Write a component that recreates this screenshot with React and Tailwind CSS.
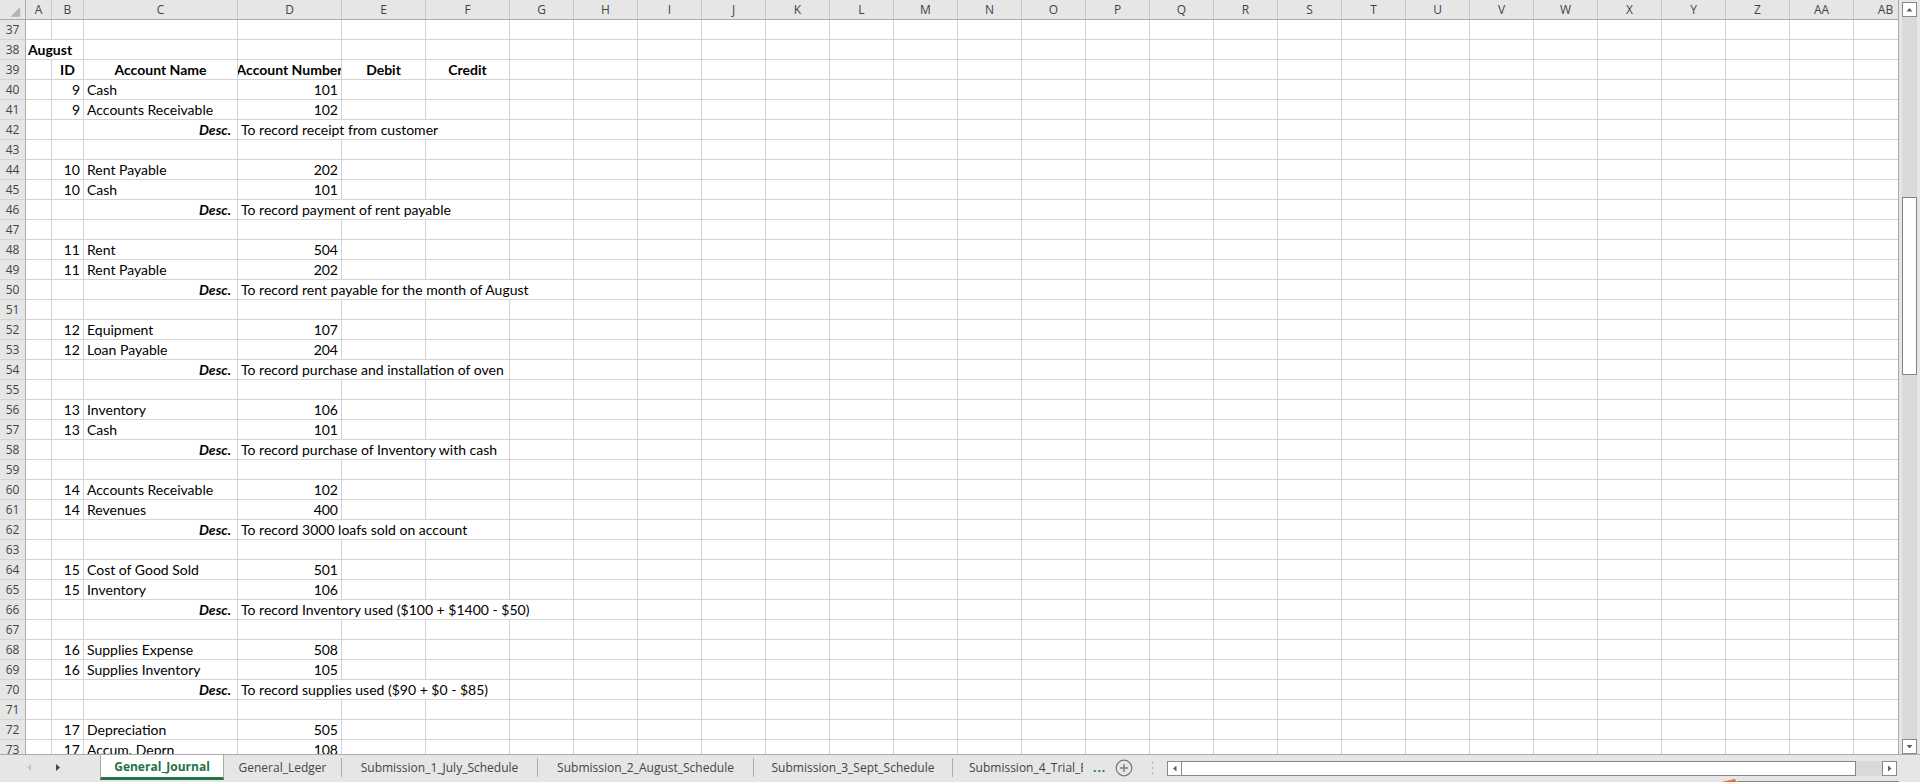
import React from 'react';

const LETTERS = ['A', 'B', 'C', 'D', 'E', 'F', 'G', 'H', 'I', 'J', 'K', 'L', 'M', 'N', 'O', 'P', 'Q', 'R', 'S', 'T', 'U', 'V', 'W', 'X', 'Y', 'Z', 'AA', 'AB'];
const GRID = 'grid grid-cols-[26px_26px_32px_154px_104px_84px_84px_repeat(22,64px)]';
const SPAN = { 1: '', 2: 'col-span-2', 3: 'col-span-3', 4: 'col-span-4' };

const JOURNAL = [
  { id: 9, lines: [['Cash', 101], ['Accounts Receivable', 102]], desc: 'To record receipt from customer', span: 3 },
  { id: 10, lines: [['Rent Payable', 202], ['Cash', 101]], desc: 'To record payment of rent payable', span: 3 },
  { id: 11, lines: [['Rent', 504], ['Rent Payable', 202]], desc: 'To record rent payable for the month of August', span: 4 },
  { id: 12, lines: [['Equipment', 107], ['Loan Payable', 204]], desc: 'To record purchase and installation of oven', span: 3 },
  { id: 13, lines: [['Inventory', 106], ['Cash', 101]], desc: 'To record purchase of Inventory with cash', span: 3 },
  { id: 14, lines: [['Accounts Receivable', 102], ['Revenues', 400]], desc: 'To record 3000 loafs sold on account', span: 3 },
  { id: 15, lines: [['Cost of Good Sold', 501], ['Inventory', 106]], desc: 'To record Inventory used ($100 + $1400 - $50)', span: 4 },
  { id: 16, lines: [['Supplies Expense', 508], ['Supplies Inventory', 105]], desc: 'To record supplies used ($90 + $0 - $85)', span: 3 },
  { id: 17, lines: [['Depreciation', 505], ['Accum. Deprn', 108]] },
];

function buildRows() {
  const rows = [{ n: 37, type: 'blank' }, { n: 38, type: 'august' }, { n: 39, type: 'header' }];
  let n = 40;
  JOURNAL.forEach(entry => {
    entry.lines.forEach(([name, num]) => rows.push({ n: n++, type: 'line', id: entry.id, name, num }));
    if (entry.desc) {
      rows.push({ n: n++, type: 'desc', desc: entry.desc, span: entry.span });
      rows.push({ n: n++, type: 'blank' });
    }
  });
  return rows;
}

// every cell: gridline right + bottom, text sits near the bottom like Excel
const cellBase = 'flex items-end pb-[1px] h-[20px] border-r border-b border-[#d4d4d4] whitespace-nowrap text-black leading-[17px]';

function Cell({ span = 1, className = '', children }) {
  return <div className={`${cellBase} ${SPAN[span]} ${className}`}>{children}</div>;
}

function Blanks({ count }) {
  return Array.from({ length: count }, (_, i) => <Cell key={`b${i}`} />);
}

function SheetRow({ row }) {
  let cells;
  if (row.type === 'august') {
    cells = (
      <>
        <Cell span={2} className="font-bold pl-[2px]">August</Cell>
        <Blanks count={26} />
      </>
    );
  } else if (row.type === 'header') {
    cells = (
      <>
        <Cell />
        <Cell className="font-bold justify-center">ID</Cell>
        <Cell className="font-bold justify-center">Account Name</Cell>
        <Cell className="font-bold justify-center overflow-hidden">
          <span className="flex-none">Account Number</span>
        </Cell>
        <Cell className="font-bold justify-center">Debit</Cell>
        <Cell className="font-bold justify-center">Credit</Cell>
        <Blanks count={22} />
      </>
    );
  } else if (row.type === 'line') {
    cells = (
      <>
        <Cell />
        <Cell className="justify-end pr-[3px]">{row.id}</Cell>
        <Cell className="pl-[3px]">{row.name}</Cell>
        <Cell className="justify-end pr-[3px]">{row.num}</Cell>
        <Blanks count={24} />
      </>
    );
  } else if (row.type === 'desc') {
    cells = (
      <>
        <Cell />
        <Cell />
        <Cell className="justify-end pr-[6px] font-bold italic">Desc.</Cell>
        <Cell span={row.span} className="pl-[3px]">{row.desc}</Cell>
        <Blanks count={25 - row.span} />
      </>
    );
  } else {
    cells = <Blanks count={28} />;
  }

  return (
    <div className={`${GRID} h-[20px]`}>
      <div className="h-[20px] bg-[#e6e6e6] border-r border-r-[#ababab] border-b border-b-[#d4d4d4] text-center leading-[19px] text-[12px] text-[#444] font-['Segoe_UI','Open_Sans',sans-serif]">
        {row.n}
      </div>
      {cells}
    </div>
  );
}

function ColumnHeader() {
  return (
    <div className={`${GRID} h-[20px] bg-[#e6e6e6] border-b border-[#ababab]`}>
      <div className="border-r border-[#ababab] flex">
        <svg width="26" height="19" viewBox="0 0 26 19">
          <polygon points="21,7 21,17 11,17" fill="#b4b4b4" />
        </svg>
      </div>
      {LETTERS.map(l => (
        <div key={l} className="border-r border-[#c8c8c8] text-center leading-[19px] text-[12px] text-[#444] font-['Segoe_UI','Open_Sans',sans-serif]">
          {l}
        </div>
      ))}
    </div>
  );
}

function ArrowBox({ dir, className = '' }) {
  const pts = {
    up: '3.5,8.5 9.5,8.5 6.5,5',
    down: '3.5,5 9.5,5 6.5,8.5',
    left: '8.5,3.5 8.5,9.5 5,6.5',
    right: '5,3.5 5,9.5 8.5,6.5',
  }[dir];
  return (
    <div className={`w-[15px] h-[15px] bg-white border border-[#8a8a8a] flex-none flex ${className}`}>
      <svg width="13" height="13" viewBox="0 0 13 13">
        <polygon points={pts} fill="#606060" />
      </svg>
    </div>
  );
}

function VerticalScrollbar() {
  return (
    <div className="w-[21px] h-[754px] bg-[#e6e6e6] flex flex-col pl-[3px]">
      <ArrowBox dir="up" className="mt-[2px]" />
      <div className="flex-1 w-[15px] bg-[#dadada] pt-[180px]">
        <div className="h-[178px] bg-white border border-[#868686]" />
      </div>
      <ArrowBox dir="down" />
    </div>
  );
}

function Tab({ width, children }) {
  return (
    <>
      <div className={`${width} h-[25px] flex-none flex items-center justify-center`}>{children}</div>
      <div className="w-px h-[19px] bg-[#ababab] flex-none mt-[3px]" />
    </>
  );
}

function TabBar() {
  return (
    <div className="relative h-[28px] bg-[#e6e6e6] border-t border-[#ababab] flex items-start text-[12px] text-[#444] font-['Segoe_UI','Open_Sans',sans-serif]">
      <div className="w-[100px] h-[25px] flex-none flex items-center">
        <svg width="100" height="25" viewBox="0 0 100 25">
          <polygon points="31,9 31,16 27,12.5" fill="#c4c4c4" />
          <polygon points="56,9 56,16 60,12.5" fill="#444" />
        </svg>
      </div>
      <div className="w-[124px] h-[25px] flex-none bg-white border-x border-[#ababab] border-b-[3px] border-b-[#217346] flex items-center justify-center font-bold text-[#217346] pt-[2px]">
        General_Journal
      </div>
      <Tab width="w-[117px]">General_Ledger</Tab>
      <Tab width="w-[195px]">Submission_1_July_Schedule</Tab>
      <Tab width="w-[215px]">Submission_2_August_Schedule</Tab>
      <Tab width="w-[198px]">Submission_3_Sept_Schedule</Tab>
      <div className="w-[130px] h-[25px] flex-none overflow-hidden flex items-center pl-[16px]">
        <span className="whitespace-nowrap">Submission_4_Trial_Balance</span>
      </div>
      <div className="h-[25px] flex items-center ml-[10px] font-bold text-[#217346] tracking-[1px]">...</div>
      <div className="h-[25px] flex items-center ml-[9px]">
        <svg width="18" height="18" viewBox="0 0 18 18">
          <circle cx="9" cy="9" r="7.8" fill="none" stroke="#7a7a7a" strokeWidth="1.2" />
          <path d="M9 5v8M5 9h8" stroke="#7a7a7a" strokeWidth="1.4" />
        </svg>
      </div>
      <div className="h-[25px] flex items-center ml-[18px]">
        <svg width="3" height="14" viewBox="0 0 3 14">
          <rect x="1" y="1" width="1" height="2" fill="#b0b0b0" />
          <rect x="1" y="6" width="1" height="2" fill="#b0b0b0" />
          <rect x="1" y="11" width="1" height="2" fill="#b0b0b0" />
        </svg>
      </div>
      <div className="ml-[13px] mt-[6px] w-[730px] h-[15px] flex">
        <ArrowBox dir="left" />
        <div className="w-[674px] h-[15px] bg-white border border-l-0 border-[#868686]" />
        <div className="flex-1 h-[15px] bg-[#d9d9d9]" />
        <ArrowBox dir="right" />
      </div>
      <svg className="absolute left-[1717px] top-[23px]" width="183" height="5" viewBox="0 0 183 5">
        <polygon points="0,5 18,1 20,5" fill="#f26b2a" />
        <line x1="20" y1="3.5" x2="182" y2="3.5" stroke="#8a8a8a" strokeWidth="1" />
      </svg>
    </div>
  );
}

export default function App() {
  const rows = buildRows();
  return (
    <div className="w-[1920px] h-[782px] overflow-hidden bg-white flex flex-col font-['Lato',sans-serif] text-[14px]">
      <div className="flex h-[754px]">
        <div className="w-[1899px] h-[754px] overflow-hidden border-r border-[#ababab]">
          <ColumnHeader />
          {rows.map(row => <SheetRow key={row.n} row={row} />)}
        </div>
        <VerticalScrollbar />
      </div>
      <TabBar />
    </div>
  );
}
